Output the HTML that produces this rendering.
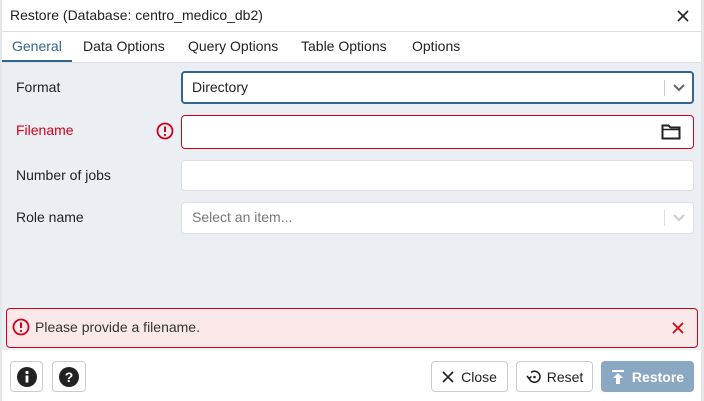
<!DOCTYPE html><html><head><style>
*{box-sizing:border-box}body{margin:0;width:704px;height:401px;background:#fff;font-family:"Liberation Sans",sans-serif;font-size:14px;color:#222;position:relative;overflow:hidden}
.a{position:absolute}
.in{position:absolute;left:181px;width:513px;background:#fff;border:1px solid #dde0e6;border-radius:4px}
.btn{position:absolute;top:361px;height:31px;border:1px solid #c8ccd2;border-radius:4px;background:#fff;display:flex;align-items:center;justify-content:center;font-size:14px;color:#222}
</style></head><body>
<div class="a" style="left:0;top:0;width:2px;height:401px;background:#e4e6ea"></div>
<div class="a" style="left:701px;top:0;width:3px;height:401px;background:#e4e6ea"></div>
<div class="a" style="left:10px;top:7px;font-size:14px">Restore (Database: centro_medico_db2)</div>
<svg class="a" style="left:677px;top:10px" width="12" height="12" viewBox="0 0 12 12"><path d="M1 1L11 11M11 1L1 11" stroke="#222" stroke-width="1.6"/></svg>
<div class="a" style="left:2px;top:31px;width:699px;height:1px;background:#dde0e6"></div>
<div class="a" style="left:12px;top:38px;color:#326690">General</div>
<div class="a" style="left:83px;top:38px">Data Options</div>
<div class="a" style="left:188px;top:38px">Query Options</div>
<div class="a" style="left:301px;top:38px">Table Options</div>
<div class="a" style="left:412px;top:38px">Options</div>
<div class="a" style="left:2px;top:60px;width:70px;height:2px;background:#326690"></div>
<div class="a" style="left:2px;top:62px;width:699px;height:288px;background:#ebeef3;border-top:1px solid #dde0e6"></div>
<div class="a" style="left:16px;top:79px">Format</div>
<div class="in" style="top:71px;height:33px;border:2px solid #326690"><span class="a" style="left:9px;top:6px">Directory</span><div class="a" style="left:481px;top:7px;width:1px;height:16px;background:#ccc"></div><svg class="a" style="left:489px;top:10px" width="14" height="10" viewBox="0 0 14 10"><path d="M2 2L7 7L12 2" stroke="#666" stroke-width="2" fill="none"/></svg></div>
<div class="a" style="left:16px;top:122px;color:#d0021b">Filename</div>
<svg class="a" style="left:156px;top:122px" width="18" height="18" viewBox="0 0 18 18"><circle cx="9" cy="9" r="7.5" stroke="#d0021b" stroke-width="1.8" fill="none"/><path d="M9 4.5V10" stroke="#d0021b" stroke-width="2"/><circle cx="9" cy="13" r="1.1" fill="#d0021b"/></svg>
<div class="in" style="top:115px;height:34px;border:1px solid #d0021b"><svg class="a" style="left:479px;top:8px" width="20" height="16" viewBox="0 0 20 16"><path d="M1.5 1.5H7.5L9.5 3.5H18.5V14.5H1.5Z" stroke="#222" stroke-width="2" fill="none"/><path d="M1.5 5.5H18.5" stroke="#222" stroke-width="1.5"/></svg></div>
<div class="a" style="left:16px;top:167px">Number of jobs</div>
<div class="in" style="top:160px;height:31px"></div>
<div class="a" style="left:16px;top:209px">Role name</div>
<div class="in" style="top:202px;height:32px"><span class="a" style="left:10px;top:6px;color:#777">Select an item...</span><div class="a" style="left:482px;top:7px;width:1px;height:16px;background:#ddd"></div><svg class="a" style="left:490px;top:10px" width="14" height="10" viewBox="0 0 14 10"><path d="M2 2L7 7L12 2" stroke="#ccc" stroke-width="2" fill="none"/></svg></div>
<div class="a" style="left:6px;top:308px;width:692px;height:40px;background:#fbe9ea;border:1px solid #d0021b;border-radius:4px"></div>
<svg class="a" style="left:12px;top:318px" width="18" height="18" viewBox="0 0 18 18"><circle cx="9" cy="9" r="7.5" stroke="#d0021b" stroke-width="1.8" fill="none"/><path d="M9 4.5V10" stroke="#d0021b" stroke-width="2"/><circle cx="9" cy="13" r="1.1" fill="#d0021b"/></svg>
<div class="a" style="left:35px;top:319px;color:#333">Please provide a filename.</div>
<svg class="a" style="left:672px;top:322px" width="12" height="12" viewBox="0 0 12 12"><path d="M1 1L11 11M11 1L1 11" stroke="#d0021b" stroke-width="1.8"/></svg>
<div class="btn" style="left:10px;width:33px"><svg width="20" height="20" viewBox="0 0 20 20"><circle cx="10" cy="10" r="10" fill="#222"/><rect x="8.6" y="8.5" width="2.8" height="7" fill="#fff"/><circle cx="10" cy="5.5" r="1.6" fill="#fff"/></svg></div>
<div class="btn" style="left:52px;width:34px"><svg width="20" height="20" viewBox="0 0 20 20"><circle cx="10" cy="10" r="10" fill="#222"/><text x="10" y="15" text-anchor="middle" fill="#fff" font-size="14" font-weight="bold" font-family="Liberation Sans">?</text></svg></div>
<div class="btn" style="left:431px;width:77px"><svg width="12" height="12" viewBox="0 0 12 12" style="margin-right:7px"><path d="M1 1L11 11M11 1L1 11" stroke="#222" stroke-width="1.6"/></svg>Close</div>
<div class="btn" style="left:516px;width:77px"><svg width="16" height="16" viewBox="0 0 16 16" style="margin-right:5px"><path d="M3 8A5.5 5.5 0 1 0 5 3.5" stroke="#222" stroke-width="1.6" fill="none"/><path d="M1 7L3 9.5L5.5 7.5" stroke="#222" stroke-width="1.6" fill="none"/><circle cx="8.5" cy="8" r="1.3" fill="#222"/></svg>Reset</div>
<div class="btn" style="left:601px;width:93px;background:#8aa8c2;border-color:#8aa8c2;color:#fff;font-weight:bold"><svg width="14" height="16" viewBox="0 0 14 16" style="margin-right:7px"><rect x="1" y="1" width="12" height="2" fill="#fff"/><path d="M7 4L12 9H9V15H5V9H2Z" fill="#fff"/></svg>Restore</div>
</body></html>
